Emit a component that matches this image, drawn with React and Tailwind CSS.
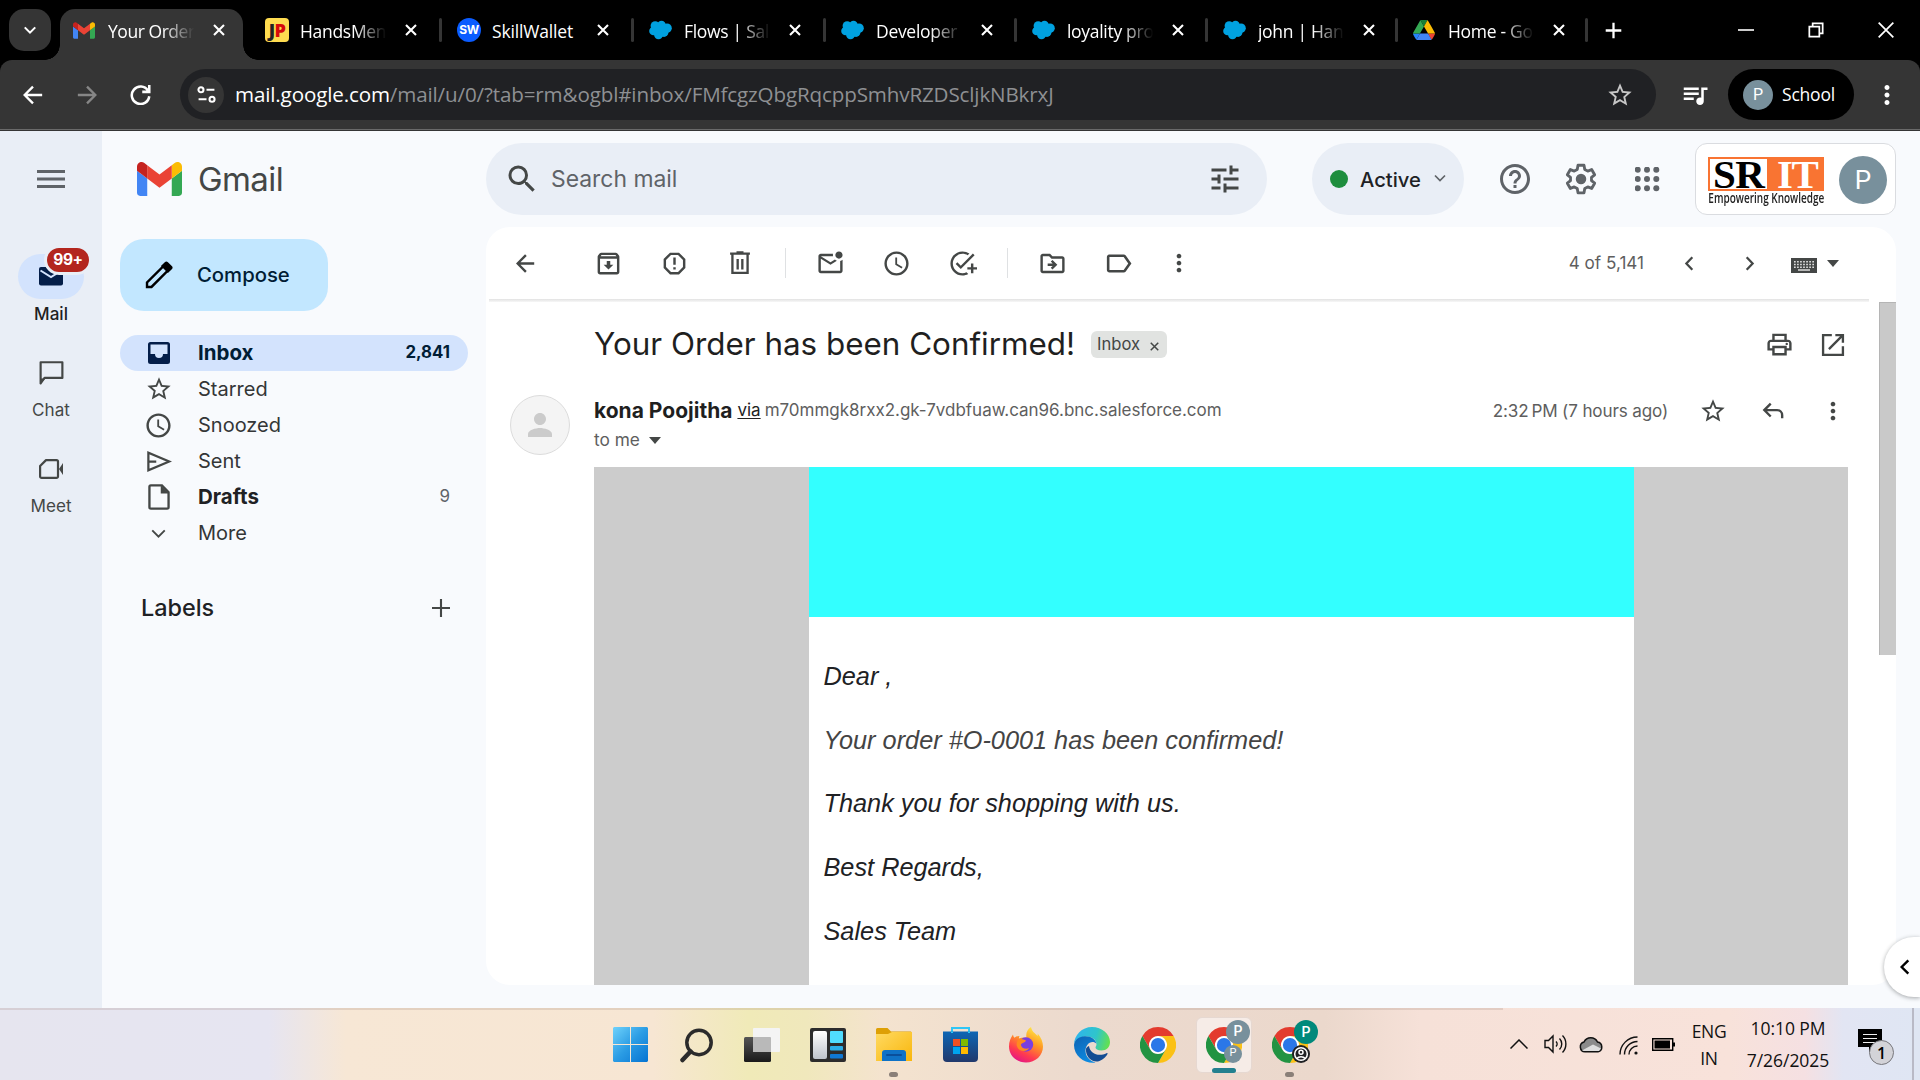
import React from "react";
import {
  MdSearch, MdTune, MdHelpOutline, MdReportGmailerrorred, MdAccessTime, MdAddTask,
  MdOutlineDriveFileMove, MdLabelOutline, MdMoreVert, MdOutlineArchive, MdOutlineMarkEmailUnread,
  MdStarBorder, MdOutlineLocalPrintshop, MdOutlineQueueMusic, MdPerson,
} from "react-icons/md";

const ui = "font-['Inter',sans-serif]";
const chrome = "font-['Open_Sans',sans-serif]";

function Line({ d, size = 24, w = 2, className = "", cap = "butt", join = "miter", children }) {
  return (
    <svg width={size} height={size} viewBox="0 0 24 24" fill="none" stroke="currentColor" strokeWidth={w} strokeLinecap={cap} strokeLinejoin={join} className={`shrink-0 ${className}`}>
      {d && <path d={d} />}
      {children}
    </svg>
  );
}

const Close = ({ size = 12, w = 4.2, className = "" }) => <Line size={size} w={w} d="M2 2l20 20M22 2L2 22" className={className} />;

function GmailLogo({ className }) {
  return (
    <svg viewBox="52 42 88 66" className={className}>
      <path fill="#4285f4" d="M58 108h14V74L52 59v43c0 3.32 2.69 6 6 6" />
      <path fill="#34a853" d="M120 108h14c3.32 0 6-2.69 6-6V59l-20 15" />
      <path fill="#fbbc04" d="M120 48v26l20-15v-8c0-7.42-8.47-11.65-14.4-7.2" />
      <path fill="#ea4335" d="M72 74V48l24 18 24-18v26L96 92" />
      <path fill="#c5221f" d="M52 51v8l20 15V48l-5.6-4.2c-5.94-4.45-14.4-.22-14.4 7.2" />
    </svg>
  );
}

function Cloud() {
  return (
    <svg viewBox="0 0 23 20" className="w-[23px] h-[20px]" fill="#00a1e0">
      <circle cx="6.2" cy="5.8" r="4.6" /><circle cx="12.5" cy="5" r="4.2" /><circle cx="18" cy="8.2" r="4.8" />
      <circle cx="4.5" cy="11" r="4.3" /><circle cx="9.5" cy="14.8" r="4.4" /><circle cx="15" cy="12.5" r="4.4" />
      <path d="M5 5h11l3 6-6 6H7l-3-4z" />
    </svg>
  );
}

function Drive() {
  return (
    <svg viewBox="0 0 87.3 78" preserveAspectRatio="none" className="w-[22px] h-[20px]">
      <path fill="#2684fc" d="m6.6 66.85 3.85 6.65c.8 1.4 1.95 2.5 3.3 3.3l13.75-23.8h-27.5c0 1.55.4 3.1 1.2 4.5z" />
      <path fill="#34a853" d="m43.65 25-13.75-23.8c-1.35.8-2.5 1.9-3.3 3.3l-25.4 44a9.06 9.06 0 0 0 -1.2 4.5h27.5z" />
      <path fill="#ea4335" d="m73.55 76.8c1.35-.8 2.5-1.9 3.3-3.3l1.6-2.75 7.65-13.25c.8-1.4 1.2-2.95 1.2-4.5h-27.502l5.852 11.5z" />
      <path fill="#188038" d="m43.65 25 13.75-23.8c-1.35-.8-2.9-1.2-4.5-1.2h-18.5c-1.6 0-3.15.45-4.5 1.2z" />
      <path fill="#4285f4" d="m59.8 53h-32.3l-13.75 23.8c1.35.8 2.9 1.2 4.5 1.2h50.8c1.6 0 3.15-.45 4.5-1.2z" />
      <path fill="#fbbc04" d="m73.4 26.5-12.7-22c-.8-1.4-1.95-2.5-3.3-3.3l-13.75 23.8 16.15 28h27.45c0-1.55-.4-3.1-1.2-4.5z" />
    </svg>
  );
}

function ChromeLogo() {
  return (
    <svg viewBox="0 0 48 48" className="w-9 h-9">
      <circle cx="24" cy="24" r="12" fill="#fff" />
      <path fill="#e33b2e" d="M24,12H44.7812a23.9939,23.9939,0,0,0-41.5639.0029L13.6079,30l.0093-.0024A11.9852,11.9852,0,0,1,24,12Z" />
      <path fill="#fbc116" d="M34.3913,30.0029,24.0007,48A23.994,23.994,0,0,0,44.78,12.0031H23.9989l-.0025.0093A11.985,11.985,0,0,1,34.3913,30.0029Z" />
      <path fill="#229342" d="M13.6086,30.0031,3.218,12.006A23.994,23.994,0,0,0,24.0025,48L34.3931,30.0029l-.0067-.0068a11.9852,11.9852,0,0,1-20.7778.007Z" />
      <circle cx="24" cy="24" r="9.5" fill="#2b77e8" />
    </svg>
  );
}

const favicons = {
  gmail: <GmailLogo className="w-[22px] h-[17px]" />,
  jp: <span className="flex h-6 w-6 shrink-0 items-center justify-center rounded-sm bg-[#ffdc50] font-['Open_Sans',sans-serif] text-[18px] font-extrabold leading-none tracking-[-0.5px] text-[#222]">J<span className="text-[#d60b0b]">P</span></span>,
  sw: <span className="flex h-6 w-6 shrink-0 items-center justify-center rounded-full bg-[#0b5cff] font-['Inter',sans-serif] text-[12px] font-bold leading-none tracking-[-0.5px] text-white">SW</span>,
  sf: <Cloud />,
  drive: <Drive />,
};

const tabs = [
  ["gmail", "Your Order", "w-[192px]"], ["jp", "HandsMen", "w-[192px]"], ["sw", "SkillWallet", "w-[192px]"], ["sf", "Flows | Sale", "w-[192px]"],
  ["sf", "Developer", "w-[191px]"], ["sf", "loyality pro", "w-[191px]"], ["sf", "john | Hand", "w-[190px]"], ["drive", "Home - Go", "w-[190px]"],
];

function TabStrip() {
  return (
    <div className="flex h-[60px] bg-black pl-[9px]">
      <div className="mt-[9px] mr-[9px] flex h-[42px] w-[42px] shrink-0 items-center justify-center rounded-[15px] bg-[#353535] text-white">
        <Line size={14} w={3.6} d="M3 7.5l9 9 9-9" />
      </div>
      {tabs.map(([icon, title, width], i) => (
        <div key={i} className={`relative h-[60px] shrink-0 pt-[9px] ${width}`}>
          {i === 0 && (
            <>
              <div className="absolute bottom-0 left-[-15px] h-[15px] w-[15px] bg-[radial-gradient(circle_at_0_0,transparent_14.5px,#353535_15px)]" />
              <div className="absolute bottom-0 left-[183px] h-[15px] w-[15px] bg-[radial-gradient(circle_at_100%_0,transparent_14.5px,#353535_15px)]" />
            </>
          )}
          <div className={`flex h-[51px] w-[183px] items-start rounded-t-[15px] pl-[13px] ${i === 0 ? "bg-[#353535]" : ""}`}>
            <div className="flex h-[42px] w-[23px] items-center">{favicons[icon]}</div>
            <div className={`ml-3 h-[42px] w-[88px] whitespace-nowrap pt-px text-[17.5px] leading-[42px] text-white ${chrome} ${icon === "gmail" ? "tracking-[-0.45px]" : icon === "sw" ? "tracking-[-0.17px]" : "tracking-[-0.3px]"} ${icon === "sw" ? "" : "[mask-image:linear-gradient(90deg,#000_62%,transparent_98%)]"}`}>{title}</div>
            <div className="ml-[17px] flex h-[42px] items-center text-white"><Close /></div>
          </div>
          {i > 0 && <div className="absolute right-[2px] top-[18px] h-6 w-[3px] rounded bg-[#353535]" />}
        </div>
      ))}
      <div className="ml-[15px] flex h-[60px] items-center text-white"><Line size={17} w={3.2} d="M12 1v22M1 12h22" /></div>
      <div className="ml-auto mr-[26px] flex h-[60px] items-center gap-[54px] text-white">
        <Line size={16} w={2.4} d="M0 12h24" />
        <Line size={16} w={2.6} d="M2 7h15v15H2zM7 6V2h15v15h-4" />
        <Line size={16} w={2.6} d="M1 1l22 22M23 1L1 23" />
      </div>
    </div>
  );
}

function AddressBar() {
  return (
    <div className="bg-black">
      <div className="flex h-[71px] items-start rounded-t-[12px] border-b border-[#353535] bg-[#353535] pt-[9px] shadow-[inset_0_-1px_0_#6a6a6a]">
        <div className="flex h-[51px] w-[180px] items-center pl-[23px] text-white">
          <Line size={20} w={2.8} d="M23 12H2M12 2L2 12l10 10" />
          <Line size={20} w={2.8} d="M1 12h21M12 2l10 10-10 10" className="ml-[34px] text-[#868686]" />
          <Line size={21} w={2.9} d="M20.5 7.5A10 10 0 1 0 22 14M22 1v8h-8" className="ml-[33px]" />
        </div>
        <div className="flex h-[51px] w-[1476px] items-center rounded-full bg-[#202124] pl-2">
          <div className="flex h-9 w-9 items-center justify-center rounded-full bg-[#353535] text-white">
            <Line size={19} w={2.6}><circle cx="5" cy="6" r="3.2" /><path d="M12 6h10M2 18h10" /><circle cx="19" cy="18" r="3.2" /></Line>
          </div>
          <div className={`ml-[11px] flex-1 text-[20.6px] tracking-[-0.14px] text-[#8e9093] ${chrome}`}>
            <span className="text-white">mail.google.com</span>/mail/u/0/?tab=rm&amp;ogbl#inbox/FMfcgzQbgRqcppSmhvRZDScljkNBkrxJ
          </div>
          <MdStarBorder size={28} className="mr-[22px] text-[#c7c7c7]" />
        </div>
        <div className="flex h-[51px] flex-1 items-center text-white">
          <MdOutlineQueueMusic size={30} className="ml-[24px]" />
          <div className="ml-[18px] flex h-[51px] w-[126px] items-center rounded-full bg-black pl-[15px]">
            <span className="flex h-[30px] w-[30px] items-center justify-center rounded-full bg-[#78909c] font-['Roboto',sans-serif] text-[16px]">P</span>
            <span className={`ml-[9px] text-[17.5px] tracking-[-0.2px] ${chrome}`}>School</span>
          </div>
          <MdMoreVert size={30} className="ml-[18px]" />
        </div>
      </div>
    </div>
  );
}

function RailItem({ label, active, children }) {
  return (
    <div className="flex h-24 flex-col items-center">
      <div className={`relative flex h-[45px] w-[66px] items-center justify-center rounded-full ${active ? "bg-[#d3e3fd] text-[#041e49]" : "text-[#444746]"}`}>
        {children}
        {active && <span className="absolute left-[26px] top-[-9px] flex h-[30px] w-[48px] items-center justify-center rounded-full border-[3px] border-[#e9eef6] bg-[#b3261e] text-[15.5px] font-bold tracking-[-0.4px] text-white">99+</span>}
      </div>
      <div className={`mt-[3px] text-[17.1px] leading-6 ${active ? "font-medium text-[#1f1f1f]" : "text-[#444746]"}`}>{label}</div>
    </div>
  );
}

function Rail() {
  return (
    <div className="w-[102px] shrink-0 bg-[#e9eef6]">
      <div className="flex h-[123px] justify-center pt-[39px] text-[#5f6368]"><svg width="28" height="19" fill="currentColor"><path d="M0 0h28v3H0zM0 7.5h28v3H0zM0 15h28v3H0z" /></svg></div>
      <RailItem label="Mail" active>
        <svg width="24" height="19" viewBox="0 0 24 19" fill="currentColor"><path d="M2 0h20a2 2 0 0 1 2 2v14.500a2 2 0 0 1-2 2H2a2 2 0 0 1-2-2V2a2 2 0 0 1 2-2z" /><path d="M1.500 3.500L12 10l10.500-6.500" fill="none" stroke="#d3e3fd" strokeWidth="2" /></svg>
      </RailItem>
      <RailItem label="Chat"><Line size={29} w={1.8} d="M3 21V3.500h18v13H6.200z" join="round"><path d="M3 17v4l4-4z" fill="currentColor" stroke="none" /></Line></RailItem>
      <RailItem label="Meet">
        <svg width="24" height="20" viewBox="0 0 24 20" fill="none" stroke="currentColor" strokeWidth="2.200" strokeLinejoin="round"><path d="M7 1.100h10.500a1.500 1.500 0 0 1 1.500 1.500v14.800a1.500 1.500 0 0 1-1.500 1.500H2.600a1.500 1.500 0 0 1-1.500-1.500V7z" /><path d="M20 10l4-6v12z" fill="currentColor" stroke="none" /></svg>
      </RailItem>
    </div>
  );
}

function Srit() {
  return (
    <div className="flex w-[116px] flex-col items-center">
      <div className="flex h-[34px] w-[116px] overflow-hidden border-2 border-[#f97432] bg-white font-['Liberation_Serif',serif] text-[41px] font-bold leading-[31px]">
        <span className="w-[57px] pl-[3px] tracking-[-0.5px] text-black">SR</span>
        <span className="flex-1 bg-[#f97432] pl-[10px] tracking-[-1.5px] text-white">IT</span>
      </div>
      <div className="h-[14px] origin-center scale-x-[0.74] whitespace-nowrap font-['Open_Sans',sans-serif] text-[13.500px] font-semibold leading-[14px] text-[#222]">Empowering Knowledge</div>
    </div>
  );
}

function Header() {
  return (
    <div className="flex h-24 items-start pt-3">
      <div className="flex h-[72px] w-[384px] items-center pl-[35px]">
        <GmailLogo className="h-[34px] w-[45px]" />
        <span className="ml-[16px] pt-[2px] text-[33px] tracking-[-0.6px] text-[#444746]">Gmail</span>
      </div>
      <div className="flex h-[72px] w-[781px] items-center rounded-full bg-[#e9eef6] pl-[18px] pr-[24px] text-[#444746]">
        <MdSearch size={36} />
        <span className="ml-[11px] flex-1 text-[22.900px] text-[#5f6368]">Search mail</span>
        <MdTune size={36} />
      </div>
      <div className="ml-[45px] flex h-[72px] w-[152px] items-center rounded-full bg-[#e9eef6] pl-[18px]">
        <span className="h-[18px] w-[18px] rounded-full bg-[#1e8e3e]" />
        <span className="ml-[12px] pt-[3px] text-[20.200px] font-medium text-[#202124]">Active</span>
        <Line size={12} w={3.400} d="M2 7l10 10L22 7" className="ml-[13px] mb-[2px] text-[#5f6368]" />
      </div>
      <div className="ml-[18px] flex h-[72px] items-center text-[#5f6368]">
        <div className="flex w-[66px] justify-center"><MdHelpOutline size={36} /></div>
        <div className="flex w-[66px] justify-center">
          <Line size={36} w={1.900} join="round" d="M10 2.800h4l.5 2.800 2 1.100 2.600-1 2 3.500-2.100 1.700v2.200l2.100 1.700-2 3.500-2.600-1-2 1.100-.5 2.800h-4l-.5-2.800-2-1.100-2.600 1-2-3.500L5 13.100v-2.200L2.900 9.200l2-3.500 2.600 1 2-1.100z"><circle cx="12" cy="12" r="3.500" fill="currentColor" stroke="none" /></Line>
        </div>
        <div className="flex w-[66px] justify-center">
          <svg width="25" height="25" fill="currentColor">{[3.2, 12.5, 21.8].map((y) => [3.2, 12.5, 21.8].map((x) => <circle key={x + "-" + y} cx={x - 0.5} cy={y - 0.5} r="3" />))}</svg>
        </div>
      </div>
      <div className="ml-[15px] flex h-[72px] w-[201px] items-center rounded-[12px] border border-[#dadce0] bg-white pl-3">
        <div className="pt-[3px]"><Srit /></div>
        <span className="ml-[15px] mt-[2px] flex h-12 w-12 items-center justify-center rounded-full bg-[#78909c] font-['Roboto',sans-serif] text-[26px] text-white">P</span>
      </div>
    </div>
  );
}

const folders = [
  ["Inbox", <svg width="22" height="22" viewBox="0 0 22 22"><path fill="currentColor" fillRule="evenodd" d="M2.500 0h17A2.500 2.500 0 0 1 22 2.500v17a2.500 2.500 0 0 1-2.500 2.500h-17A2.500 2.500 0 0 1 0 19.500v-17A2.500 2.500 0 0 1 2.500 0zM2.500 2.500V12H7a4 4 0 0 0 8 0h4.500V2.500z" /></svg>, "2,841"],
  ["Starred", <MdStarBorder size={28} />],
  ["Snoozed", <MdAccessTime size={29} />],
  ["Sent", <Line size={27} w={2} d="M3 4.200v15.600L21.500 12zM3 12h7" />],
  ["Drafts", <Line size={28} w={2} d="M14.500 2H5a1.200 1.200 0 0 0-1.200 1.200v17.600A1.200 1.200 0 0 0 5 22h14a1.200 1.200 0 0 0 1.200-1.200V8z"><path d="M13.500 2v7h7z" fill="currentColor" stroke="none" /></Line>, "9"],
  ["More", <Line size={15} w={3} d="M2 7l10 10L22 7" />],
];

function Sidebar() {
  return (
    <div className="w-[384px] shrink-0 pl-[18px] pt-3">
      <div className="flex h-[72px] w-[208px] items-center rounded-[24px] bg-[#c2e7ff] pl-[24px]">
        <Line size={29} w={2} className="text-black" join="miter" d="M2.500 17.800v3.700h3.700L21 6.700 17.300 3z"><path d="M14 4.200L17.200 1a1.800 1.800 0 0 1 2.600 0L23 4.200a1.800 1.800 0 0 1 0 2.600L19.800 10z" fill="currentColor" stroke="none" /></Line>
        <span className="ml-[24px] text-[20.300px] font-medium text-[#001d35]">Compose</span>
      </div>
      <div className="mt-6 w-[348px]">
        {folders.map(([name, icon, count], i) => (
          <div key={name} className={`flex h-9 items-center rounded-full pr-[18px] ${i === 0 ? "bg-[#d3e3fd] font-bold text-[#001d35]" : name === "Drafts" ? "font-bold text-[#202124]" : "text-[#343637]"}`}>
            <span className={`flex w-[78px] justify-center pr-px ${i === 0 ? "text-[#041e49]" : "text-[#444746]"}`}>{icon}</span>
            <span className={`flex-1 ${i === 0 || name === "Drafts" ? "text-[20.500px]" : "text-[20px]"}`}>{name}</span>
            {count && <span className={i === 0 ? "text-[16.800px]" : "text-[17px] font-normal text-[#5f6368]"}>{count}</span>}
          </div>
        ))}
      </div>
      <div className="mt-[39px] flex h-9 w-[348px] items-center justify-between pl-[21px] pr-[18px]">
        <span className="text-[23.400px] font-medium text-[#202124]">Labels</span>
        <Line size={18} w={2.800} d="M12 0v24M0 12h24" className="text-[#444746]" />
      </div>
    </div>
  );
}

const Cell = ({ children, className = "w-[66px]" }) => <div className={`flex shrink-0 items-center justify-center ${className}`}>{children}</div>;
const Divider = () => <Cell className="w-6"><span className="h-[30px] w-px bg-[#dfe1e3]" /></Cell>;

function Toolbar() {
  return (
    <div className="flex h-[72px] items-center pl-[6px] text-[#444746]">
      <Cell><Line size={19} w={3} d="M23 12H3M12.500 1.500L2 12l10.500 10.500" /></Cell>
      <div className="w-[17px]" />
      <Cell><MdOutlineArchive size={29} /></Cell>
      <Cell><MdReportGmailerrorred size={29} /></Cell>
      <Cell><Line size={28} w={2} d="M3.500 4h17M9 3h6M5.500 5v15.500h13V5M10 8.500v9M14 8.500v9" /></Cell>
      <Divider />
      <Cell><MdOutlineMarkEmailUnread size={29} /></Cell>
      <Cell><MdAccessTime size={29} /></Cell>
      <Cell><MdAddTask size={29} /></Cell>
      <Divider />
      <Cell><MdOutlineDriveFileMove size={29} /></Cell>
      <Cell><MdLabelOutline size={31} /></Cell>
      <Cell className="w-[56px]"><MdMoreVert size={28} /></Cell>
      <div className="ml-auto text-[17.100px] text-[#5e5e5e]">4 of 5,141</div>
      <Cell className="ml-[15px] w-[60px]"><Line size={15} w={3.600} d="M16.500 2L7 12l9.500 10" /></Cell>
      <Cell className="w-[60px]"><Line size={15} w={3.600} d="M7.500 2L17 12 7.500 22" /></Cell>
      <svg width="26" height="15" viewBox="0 0 26 15" className="ml-[12px] mt-[4px]"><path fill="#444746" d="M0 0h26v15H0z" /><path d="M3 3.700h20M3 6.500h20M3 9.200h20" stroke="#ddd" strokeWidth="1.600" strokeDasharray="1.700 1.350" /><path d="M7 12h12" stroke="#ddd" strokeWidth="1.500" /></svg>
      <svg width="12" height="7" className="ml-[10px] mr-[57px]" fill="#444746"><path d="M0 0h12L6 7z" /></svg>
    </div>
  );
}

function Message() {
  return (
    <div className="flex min-h-0 flex-1 flex-col pl-[24px] pr-[31px]">
      <div className="flex h-[90px] items-center pl-[84px] pt-px">
        <h1 className="whitespace-nowrap text-[31.400px] text-[#1f1f1f]">Your Order has been Confirmed!</h1>
        <span className="ml-[16px] flex h-[27px] w-[76px] items-center rounded-[6px] bg-[#e1e3e1] pl-[6px] text-[16.600px] text-[#444746]">Inbox<Close size={9} w={4} className="ml-[10px] mt-[3px]" /></span>
        <div className="ml-auto flex text-[#444746]">
          <Cell className="w-[54px]"><MdOutlineLocalPrintshop size={29} /></Cell>
          <Cell className="w-[54px]"><Line size={28} w={2} d="M11 3.500H3.500v17h17V13M14 3.500h6.500V10M20 4L8.500 15.500" /></Cell>
        </div>
        <div className="-mr-[12px]" />
      </div>
      <div className="flex h-[78px] items-start pt-[6px]">
        <span className="flex h-[60px] w-[60px] items-center justify-center rounded-full border border-[#dcdcdc] bg-[#f4f4f4] text-[#cbcbcb]"><MdPerson size={36} /></span>
        <div className="ml-[24px]">
          <div className="flex h-[30px] items-center whitespace-nowrap pt-px text-[17px] text-[#5e5e5e]">
            <span className="text-[21px] font-bold text-[#1f1f1f]">kona Poojitha</span>
            <span className="ml-[5px] text-[#222] underline underline-offset-2">via</span>
            <span className="ml-[4px] tracking-[-0.02px]">m70mmgk8rxx2.gk-7vdbfuaw.can96.bnc.salesforce.com</span>
          </div>
          <div className="flex h-[30px] items-center text-[17.300px] text-[#5e5e5e]">to me<svg width="12" height="7" className="ml-[9px]" fill="#444746"><path d="M0 0h12L6 7z" /></svg></div>
        </div>
        <div className="ml-auto flex h-[32px] items-center text-[#444746]">
          <span className="mr-[15px] text-[17.100px] tracking-[-0.150px] text-[#5e5e5e]">2:32<span className="inline-block w-[3px]" />PM (7 hours ago)</span>
          <Cell className="w-[60px]"><MdStarBorder size={28} /></Cell>
          <Cell className="w-[60px]"><Line size={22} w={2.600} d="M9.500 4L2.500 11l7 7M3 11h13.500a5.500 5.500 0 0 1 5.500 5.500V20" /></Cell>
          <Cell className="w-[60px]"><MdMoreVert size={28} /></Cell>
        </div>
        <div className="-mr-[15px]" />
      </div>
      <div className="ml-[84px] flex min-h-0 flex-1 justify-center bg-[#cccccc]">
        <div className="w-[825px] bg-white">
          <div className="h-[150px] bg-[#33ffff]" />
          <div className="flex flex-col gap-[31.700px] pl-[15px] pt-[43px] font-['Liberation_Sans',Arial,sans-serif] text-[25.300px] italic leading-[32px] text-[#202124]">
            <p>Dear ,</p>
            <p className="text-[#444444]">Your order #O-0001 has been confirmed!</p>
            <p>Thank you for shopping with us.</p>
            <p>Best Regards,</p>
            <p>Sales Team</p>
          </div>
        </div>
      </div>
    </div>
  );
}

const Task = ({ children, dot }) => (
  <div className="relative flex h-[72px] w-[66px] shrink-0 items-center justify-center pt-px">
    {children}
    {dot && <span className="absolute bottom-[3px] left-[28px] h-[5px] w-[9px] rounded-full bg-[#8a7f78]" />}
  </div>
);

function Taskbar() {
  return (
    <div className="flex h-[72px] items-center bg-[linear-gradient(90deg,#e6e5ef_0%,#e6e5f1_14%,#f7e7d5_18%,#f7e6d3_34%,#f0eab8_39%,#f0e8bc_42%,#f4e3cf_46%,#ecdace_56%,#ebd8cc_69%,#f6e1d8_74%,#f8e2da_90%,#f5e0e2_94%,#e2e5f3_96%,#dfe6f3_100%)]">
      <div className="h-[72px] w-[597px] shrink-0 shadow-[inset_0_2px_0_rgba(150,120,110,0.2)]" />
      <div className="flex h-[72px] w-[906px] shrink-0 shadow-[inset_0_2px_0_rgba(150,120,110,0.2)]">
        <Task>
          <svg width="35" height="35" viewBox="0 0 35 35"><defs><linearGradient id="win" x1="0" y1="0" x2="1" y2="1"><stop offset="0" stopColor="#6fd2fb" /><stop offset=".5" stopColor="#2b9ce4" /><stop offset="1" stopColor="#0573d2" /></linearGradient></defs><path d="M1 0h16v17H0V1zM18 0h16l1 1v16H18zM0 18h17v17H1l-1-1zM18 18h17v16l-1 1H18z" fill="url(#win)" /></svg>
        </Task>
        <Task><svg width="33" height="36" viewBox="0 0 33 36" fill="none" stroke="#2b2b2b" strokeWidth="3.500" strokeLinecap="round"><circle cx="19" cy="15.500" r="12.200" /><path d="M10.500 24.500L2.500 33" strokeWidth="4.500" /></svg></Task>
        <Task>
          <svg width="36" height="34" viewBox="0 0 36 34"><defs><linearGradient id="tv" x1="0" y1="0" x2="0" y2="1"><stop offset="0" stopColor="#555" /><stop offset="1" stopColor="#1a1a1a" /></linearGradient></defs><rect y="9" width="27" height="25" rx="1.500" fill="url(#tv)" /><rect x="9" width="27" height="24" rx="1" fill="#f4f4f4" /><path d="M9 9h17a1 1 0 0 1 1 1v14H9z" fill="#b9b9b9" /></svg>
        </Task>
        <Task><svg width="36" height="34" viewBox="0 0 36 34"><defs><linearGradient id="wd" x1="0" y1="0" x2="0" y2="1"><stop offset="0" stopColor="#fff" /><stop offset="1" stopColor="#bfc4cc" /></linearGradient></defs><rect width="36" height="34" rx="2" fill="#2c2c2c" /><rect x="3" y="3" width="14" height="28" rx="2" fill="url(#wd)" /><rect x="20" y="3" width="13" height="12" rx="1" fill="#50dcff" /><rect x="20" y="18" width="13" height="4.500" rx="1" fill="#2baee8" /><rect x="20" y="26" width="13" height="4.500" rx="1" fill="#0f78d4" /></svg></Task>
        <Task dot><svg width="36" height="33" viewBox="0 0 36 33"><defs><linearGradient id="fx" x1="0" y1="0" x2="1" y2="1"><stop offset="0" stopColor="#ffda62" /><stop offset="1" stopColor="#f9b60c" /></linearGradient></defs><path d="M0 1.500A1.500 1.500 0 0 1 1.500 0h10L15 3.500h20L36 5v6H0z" fill="#dea005" /><path d="M0 6h12l4-2h20v29H0z" fill="url(#fx)" /><path d="M6 33v-8a3 3 0 0 1 3-3h18a3 3 0 0 1 3 3v8z" fill="#0f72c6" /><path d="M11 27h14" stroke="#0a4f9b" strokeWidth="2" strokeLinecap="round" /></svg></Task>
        <Task><svg width="35" height="35" viewBox="0 0 35 35"><defs><linearGradient id="st" x1="0" y1="0" x2="0" y2="1"><stop offset="0" stopColor="#0d66b5" /><stop offset="1" stopColor="#21386b" /></linearGradient></defs><path d="M9 7V1h17v6" fill="none" stroke="#2fc6f6" strokeWidth="2" /><path d="M0 4.500h35V31a4 4 0 0 1-4 4H4a4 4 0 0 1-4-4z" fill="url(#st)" /><path d="M9 6V4.500M26 6V4.500" stroke="#2fc6f6" strokeWidth="2" /><path d="M10 12h7v7h-7z" fill="#f25022" /><path d="M18 12h7v7h-7z" fill="#7fba00" /><path d="M10 20h7v7h-7z" fill="#00a4ef" /><path d="M18 20h7v7h-7z" fill="#ffb900" /></svg></Task>
        <Task>
          <svg width="34" height="36" viewBox="0 0 34 36"><defs><linearGradient id="ff" x1=".8" y1="0" x2=".3" y2="1"><stop offset="0" stopColor="#fff14a" /><stop offset=".4" stopColor="#ff9a22" /><stop offset=".75" stopColor="#ff3a50" /><stop offset="1" stopColor="#e31587" /></linearGradient></defs><path d="M17 35.500C7.500 35.500 0 28.500 0 19.500c0-5 1.500-8.500 4-12 .2 1.500.6 2.500 1.500 3.200C7 9.500 8.500 9 10.500 9c-.5 1-.7 1.800-.6 2.500 2.600-.8 5-1.200 7.600-.7C16.500 6 18.500 2 22 0c1 5 4.500 6.500 6.500 9 .3-1 .3-1.500.1-2.500 3.500 4 5.400 8.500 5.400 13 0 9-7.500 16-17 16z" fill="url(#ff)" /><circle cx="17" cy="17.500" r="7.200" fill="#7a3fe0" /><path d="M9 13c2.500-2 5.500-1 8 .5-1 2.500-4 2-5 4 0 4 5 5 8 3.500-2 4.500-10 4-12-1.500-.8-2.500-.3-4.500 1-6.500z" fill="#ff8a1f" /></svg>
        </Task>
        <Task>
          <svg width="36" height="36" viewBox="0 0 36 36"><defs><linearGradient id="eg" x1="0" y1=".3" x2="1" y2=".5"><stop offset="0" stopColor="#2fb4ee" /><stop offset=".6" stopColor="#2fc5cb" /><stop offset="1" stopColor="#62e052" /></linearGradient><linearGradient id="eb" x1="0" y1="0" x2=".5" y2="1"><stop offset="0" stopColor="#0d62b3" /><stop offset="1" stopColor="#0d8ae0" /></linearGradient></defs><path d="M0 18C0 8 8 0 18 0s18 7 18 15c0 5-3.500 8.500-8.500 8.500-4 0-6-1.500-6-3 0-1 1-1.500 1-3.500C22.500 13 18 9.500 12.500 9.500 5 9.500 0 14 0 18z" fill="url(#eg)" /><path d="M0 18c.5-5 5-8.800 11-8.800 6.500 0 11 3.500 11.500 7.800-1-1.500-2.500-2-4-2-4 0-7 4-7 9 0 5.500 4.500 10 10 11.600C11 37 0 29.500 0 18z" fill="url(#eb)" /><path d="M12 22c-.5 7 5 13.500 12 12.500 4-1 8-4.500 9.500-7.500.3-.8-.3-1.200-1-.8C25 30 16 27 15 19c-1.500.5-2.700 1.500-3 3z" fill="#134c93" /></svg>
        </Task>
        <Task><ChromeLogo /></Task>
        <Task>
          <span className="relative flex h-[56px] w-[56px] items-center justify-center rounded-[6px] border border-[#e6d8d1] bg-[#f6ece7]">
            <ChromeLogo />
            <span className="absolute right-[1px] top-[2px] flex h-[24px] w-[24px] items-center justify-center rounded-full bg-[#78909c] font-['Roboto',sans-serif] text-[14px] font-medium text-white">P</span>
            <span className="absolute bottom-[9px] right-[9px] flex h-[18px] w-[18px] items-center justify-center rounded-full bg-[#78909c] font-['Roboto',sans-serif] text-[11px] text-white">P</span>
            <span className="absolute bottom-[-1px] left-[15px] h-[5px] w-6 rounded-full bg-[#23808f]" />
          </span>
        </Task>
        <Task dot>
          <ChromeLogo />
          <span className="absolute right-[5px] top-[12px] flex h-[24px] w-[24px] items-center justify-center rounded-full bg-[#00897b] font-['Roboto',sans-serif] text-[14px] font-medium text-white">P</span>
          <svg width="18" height="18" viewBox="0 0 18 18" className="absolute bottom-[17px] right-[13px]"><circle cx="9" cy="9" r="9" fill="#202124" /><g fill="none" stroke="#fff" strokeWidth="1.500"><circle cx="9" cy="9" r="6.300" /><circle cx="9" cy="7.200" r="2" /><path d="M5 13.500c1.500-2.500 6.500-2.500 8 0" /></g></svg>
        </Task>
      </div>
      <div className="ml-auto flex h-[72px] items-center text-[#111]">
        <svg width="18" height="10" fill="none" stroke="currentColor" strokeWidth="1.500"><path d="M.5 9.500L9 1l8.500 8.500" /></svg>
        <svg width="23" height="20" viewBox="0 0 23 20" className="ml-[16px]" fill="none" stroke="currentColor" strokeWidth="1.400"><path d="M1 6.500h3.500L9 2v16l-4.500-4.500H1z" /><path d="M12 7.500c1.500 1.500 1.500 3.500 0 5M15.500 4.500c3 3 3 8 0 11M18.500 1.500c4.500 4.500 4.500 12.500 0 17" /></svg>
        <svg width="24" height="17" viewBox="0 0 24 17" className="ml-[12px]"><path d="M6 15.800a5 5 0 0 1-1-9.800 7.500 7.500 0 0 1 13.500 0 5 5 0 0 1 .5 9.800z" fill="#8b8b8b" stroke="#111" strokeWidth="1.500" /><path d="M3 14.500l11-6 8 4-2 2.500H5z" fill="#dedede" /></svg>
        <svg width="19" height="19" viewBox="0 0 19 19" className="ml-[16px] mt-[3px]" fill="none" stroke="currentColor" strokeWidth="1.400"><path d="M1 18.500A17.500 17.500 0 0 1 18.500 1M5.500 18.500a13 13 0 0 1 13-13M10 18.500a8.500 8.500 0 0 1 8.500-8.500" /><circle cx="17" cy="17" r="1.600" fill="currentColor" stroke="none" /></svg>
        <svg width="23" height="13" viewBox="0 0 23 13" className="ml-[14px] mt-px"><path d="M.7.7h20v11.600H.7z" fill="none" stroke="#000" strokeWidth="1.400" /><path d="M2.500 2.500H18v8H2.500zM21 4.500h2v4h-2z" /></svg>
        <div className={`ml-[16px] w-[36px] pt-px text-center text-[17.500px] leading-[27px] tracking-[-0.3px] ${chrome}`}>ENG<br />IN</div>
        <div className={`ml-[14px] w-[94px] text-center text-[17.500px] leading-[32px] tracking-[-0.05px] ${chrome}`}>10:10 PM<br />7/26/2025</div>
        <div className="relative mt-[6px] ml-[23px] h-[36px] w-[36px]">
          <svg width="24" height="24" viewBox="0 0 24 24"><path d="M0 0h24v18h-8l-5 5.500V18H0z" fill="#000" /><path d="M5 5.500h14M5 9.500h14M5 13.500h14" stroke="#eee" strokeWidth="1.200" /></svg>
          <span className={`absolute bottom-0 right-0 flex h-[25px] w-[25px] items-center justify-center rounded-full border border-[#77777c] bg-[#d3d3d8] text-[16px] font-semibold text-black ${chrome}`}>1</span>
        </div>
        <span className="ml-[18px] mr-[6px] h-[72px] w-[2px] bg-[#b9bac6]" />
      </div>
    </div>
  );
}

export default function App() {
  return (
    <div className={`relative flex h-[1080px] w-[1920px] flex-col overflow-hidden bg-[#f8fafd] ${ui}`}>
      <TabStrip />
      <AddressBar />
      <div className="flex h-[877px]">
        <Rail />
        <div className="flex-1">
          <Header />
          <div className="flex h-[758px]">
            <Sidebar />
            <div className="flex w-[1410px] flex-col overflow-hidden rounded-[24px] bg-white">
              <Toolbar />
              <div className="flex min-h-0 flex-1">
                <div className="relative flex min-h-0 flex-1 flex-col">
                  <div className="ml-[3px] mr-[10px] h-[3px] shrink-0 -mb-[3px] bg-[linear-gradient(#e2e2e2,#f7f7f7)]" />
                  <Message />
                </div>
                <div className="mt-[3px] h-[353px] w-[17px] border-l border-t border-[#b5b5b5] bg-[#c9c9c9]" />
              </div>
            </div>
          </div>
        </div>
      </div>
      <Taskbar />
      <div className="absolute right-0 top-[937px] flex h-[60px] w-[36px] items-center rounded-l-full bg-white pl-[13px] shadow-[0_1px_4px_rgba(60,64,67,0.45)]">
        <Line size={16} w={3.600} d="M17 2L7 12l10 10" className="text-black" />
      </div>
    </div>
  );
}
